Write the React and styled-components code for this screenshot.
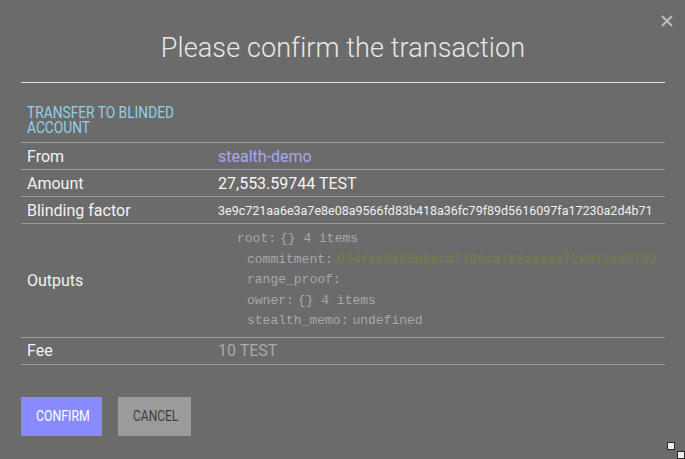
import React from "react";
import styled, { createGlobalStyle } from "styled-components";

const GlobalStyle = createGlobalStyle`
  html, body {
    margin: 0;
    padding: 0;
    background: #6b6b6b;
    font-family: Roboto, "Liberation Sans", sans-serif;
    overflow: hidden;
  }
`;

const tree = [
  { depth: 0, name: "root", meta: "{} 4 items" },
  {
    depth: 1,
    name: "commitment",
    value: "024f1e9165d6bcb7796ca7e5aaaae72e912ee0722",
  },
  { depth: 1, name: "range_proof", meta: "" },
  { depth: 1, name: "owner", meta: "{} 4 items" },
  { depth: 1, name: "stealth_memo", meta: "undefined" },
];

const App = () => {
  return (
    <Modal>
      <GlobalStyle />
      <CloseButton aria-label="close">
        <svg width="12" height="12" viewBox="0 0 12 12">
          <path d="M1 1 L11 11 M11 1 L1 11" stroke="#bdbdbd" strokeWidth="2" />
        </svg>
      </CloseButton>

      <Title>Please confirm the transaction</Title>
      <Divider />

      <SectionTitle>
        <Narrow scale={0.86}>TRANSFER TO BLINDED ACCOUNT</Narrow>
      </SectionTitle>

      <Table>
        <tbody>
          <Row>
            <Label>From</Label>
            <Value color="#aaa6f2">stealth-demo</Value>
          </Row>
          <Row>
            <Label>Amount</Label>
            <Value color="#f4f4f4">27,553.59744 TEST</Value>
          </Row>
          <Row>
            <Label>Blinding factor</Label>
            <Value color="#f0f0f0" small>
              3e9c721aa6e3a7e8e08a9566fd83b418a36fc79f89d5616097fa17230a2d4b71
            </Value>
          </Row>
          <Row>
            <Label>Outputs</Label>
            <TreeCell>
              <Tree>
                {tree.map((item) => (
                  <TreeLine key={item.name} depth={item.depth}>
                    <Key>{item.name}:</Key>
                    {item.value ? (
                      <Hex>{item.value}</Hex>
                    ) : (
                      <span>{item.meta}</span>
                    )}
                  </TreeLine>
                ))}
              </Tree>
            </TreeCell>
          </Row>
          <Row>
            <Label>Fee</Label>
            <Value color="#a9a9a9">10 TEST</Value>
          </Row>
        </tbody>
      </Table>

      <Actions>
        <Button primary>
          <Narrow scale={0.82}>CONFIRM</Narrow>
        </Button>
        <Button>
          <Narrow scale={0.8}>CANCEL</Narrow>
        </Button>
      </Actions>

      <ResizeHandle>
        <svg width="20" height="21" viewBox="0 0 20 21">
          <rect x="2.5" y="4.5" width="7" height="7" fill="#eeeeee" stroke="#2a2a2a" />
          <rect x="12.5" y="13.5" width="7" height="7" fill="#eeeeee" stroke="#2a2a2a" />
        </svg>
      </ResizeHandle>
    </Modal>
  );
};

const Modal = styled.div`
  position: relative;
  width: 685px;
  height: 459px;
  box-sizing: border-box;
  padding: 32px 20px 0 21px;
  color: #eee;
`;

const CloseButton = styled.div`
  position: absolute;
  top: 15px;
  right: 12px;
  width: 12px;
  height: 12px;
  svg {
    display: block;
  }
`;

const Title = styled.h1`
  margin: 0;
  font-size: 27px;
  font-weight: 300;
  line-height: normal;
  text-align: center;
  color: #e8e8e8;
  letter-spacing: 0.1px;
`;

const Divider = styled.hr`
  margin: 18px 0 0;
  border: none;
  height: 1px;
  background: #e2e2e2;
`;

const SectionTitle = styled.div`
  margin-top: 22px;
  width: 200px;
  font-size: 16px;
  line-height: 15px;
  color: #92d0e8;
  padding-left: 6px;
`;

const Narrow = styled.span`
  display: inline-block;
  transform: scaleX(${(p) => p.scale});
  transform-origin: left center;
`;

const Table = styled.table`
  margin-top: 7px;
  width: 644px;
  border-collapse: collapse;
  table-layout: fixed;
  border-top: 1px solid #9b9b9b;
`;

const Row = styled.tr`
  border-bottom: 1px solid #9b9b9b;
`;

const Label = styled.td`
  width: 186px;
  height: 26px;
  padding: 0 0 0 6px;
  font-size: 16px;
  color: #f2f2f2;
  vertical-align: middle;
`;

const Value = styled.td`
  padding: 0 0 0 5px;
  height: 26px;
  font-size: ${(p) => (p.small ? "12.5px" : "16px")};
  color: ${(p) => p.color};
  white-space: nowrap;
  overflow: hidden;
  vertical-align: middle;
`;

const TreeCell = styled.td`
  padding: 5px 0 5px 24px;
  overflow: hidden;
`;

const Tree = styled.div`
  font-family: "Liberation Mono", "DejaVu Sans Mono", monospace;
  font-size: 13px;
  line-height: 20.6px;
  color: #a8a8a8;
  white-space: nowrap;
  overflow: hidden;
`;

const TreeLine = styled.div`
  padding-left: ${(p) => p.depth * 10}px;
`;

const Key = styled.span`
  margin-right: 4px;
`;

const Hex = styled.span`
  color: #718443;
`;

const Actions = styled.div`
  display: flex;
  gap: 16px;
  margin-top: 32px;
`;

const Button = styled.div`
  height: 39px;
  display: flex;
  align-items: center;
  box-sizing: border-box;
  width: ${(p) => (p.primary ? "81px" : "73px")};
  padding-left: 15px;
  background: ${(p) => (p.primary ? "#8a8aff" : "#9b9b9b")};
  color: ${(p) => (p.primary ? "#ffffff" : "#3e3e3e")};
  font-size: 15px;
  cursor: pointer;
`;

const ResizeHandle = styled.div`
  position: absolute;
  right: 0;
  bottom: 0;
  width: 20px;
  height: 21px;
  svg {
    display: block;
  }
`;

export default App;
